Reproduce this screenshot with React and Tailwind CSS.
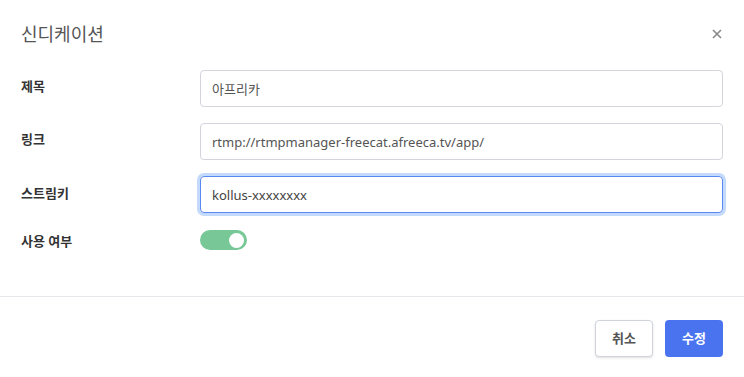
import React, { useState } from "react";

const font = { fontFamily: '"Noto Sans", "Noto Sans CJK KR", sans-serif' };

function Field({ label, children, top = "pt-[7px]" }) {
  return (
    <div className="flex">
      <div className={`w-[179px] shrink-0 text-[13px] font-semibold text-[#333] ${top}`}>{label}</div>
      <div className="flex-1">{children}</div>
    </div>
  );
}

export default function App() {
  const [enabled, setEnabled] = useState(true);

  return (
    <div className="w-[744px] h-[377px] bg-white overflow-hidden" style={font}>
      {/* Header */}
      <div className="flex items-center justify-between pl-[21px] pr-[22px] h-[70px] pb-[2px]">
        <h2 className="text-[18px] text-[#555] font-normal">신디케이션</h2>
        <button className="text-[#888]">
          <svg width="10" height="10" viewBox="0 0 10 10" fill="none" stroke="currentColor" strokeWidth="1.6">
            <path d="M1 1L9 9M9 1L1 9" />
          </svg>
        </button>
      </div>

      {/* Body */}
      <div className="pl-[21px] pr-[21px] flex flex-col gap-[16px] h-[226px]">
        <Field label="제목">
          <input
            defaultValue="아프리카"
            className="w-full h-[37px] px-[11px] text-[13px] text-[#555] border border-[#d4d4dc] rounded-[4px] outline-none"
          />
        </Field>
        <Field label="링크">
          <input
            defaultValue="rtmp://rtmpmanager-freecat.afreeca.tv/app/"
            className="w-full h-[37px] px-[11px] text-[13px] text-[#555] border border-[#d4d4dc] rounded-[4px] outline-none"
          />
        </Field>
        <Field label="스트림키" top="pt-[8px]">
          <div className="relative">
            <input
              defaultValue="kollus-xxxxxxxx"
              className="w-full h-[37px] px-[11px] text-[13px] text-[#444] border border-[#5b87f0] rounded-[4px] outline-none ring-[3px] ring-[#c4dafc]"
            />
          </div>
        </Field>
        <Field label="사용 여부" top="pt-[3px]">
          <button
            onClick={() => setEnabled(!enabled)}
            className={`mt-[1px] w-[47px] h-[20px] rounded-full flex items-center px-[3px] ${enabled ? "bg-[#77c797] justify-end" : "bg-[#ccc] justify-start"}`}
          >
            <span className="w-[15px] h-[15px] rounded-full bg-white" />
          </button>
        </Field>
      </div>

      {/* Footer */}
      <div className="border-t border-[#e5e7eb] flex justify-end gap-[12px] pt-[23px] pr-[21px]">
        <button className="w-[58px] h-[37px] rounded-[4px] border border-[#d0d3db] bg-white text-[13px] font-semibold text-[#555] shadow-sm">
          취소
        </button>
        <button className="w-[58px] h-[37px] rounded-[4px] bg-[#4a74ef] text-[13px] font-semibold text-white">
          수정
        </button>
      </div>
    </div>
  );
}
